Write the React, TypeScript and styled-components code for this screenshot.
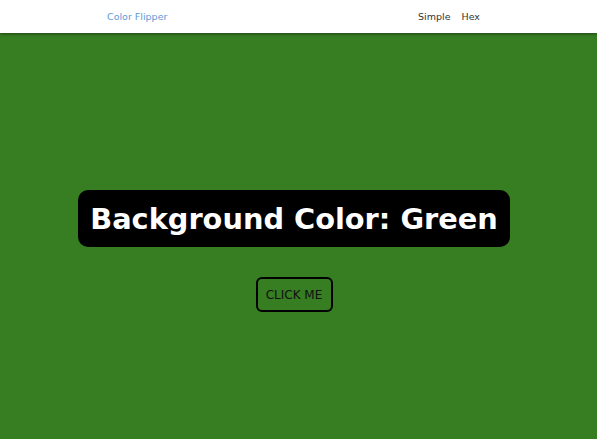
import React, { useState } from "react";
import styled, { createGlobalStyle } from "styled-components";

const Global = createGlobalStyle`
  html, body { margin: 0; padding: 0; }
  body { font-family: "DejaVu Sans", Verdana, sans-serif; }
`;

const Page = styled.div<{ $bg: string }>`
  min-height: 439px;
  background: ${(p) => p.$bg};
  display: flex;
  flex-direction: column;
`;

const Nav = styled.nav`
  height: 33px;
  background: #fff;
  box-shadow: 0 1px 3px rgba(0, 0, 0, 0.45);
  display: flex;
  align-items: center;
  justify-content: space-between;
  padding: 0 117px 0 107px;
  font-size: 9.5px;
  position: relative;
  z-index: 1;
`;

const Brand = styled.a`
  color: #5b9ad8;
  text-decoration: none;
`;

const Links = styled.div`
  display: flex;
  gap: 11px;
`;

const NavLink = styled.a`
  color: #333;
  text-decoration: none;
`;

const Main = styled.main`
  display: flex;
  flex-direction: column;
  align-items: center;
  padding: 157px 9px 0 0;
`;

const Heading = styled.h2`
  margin: 0;
  background: #000;
  color: #fff;
  font-size: 28.8px;
  font-weight: bold;
  padding: 0 12px;
  height: 57px;
  display: flex;
  align-items: center;
  border-radius: 10px;
`;

const Button = styled.button`
  margin-top: 30px;
  width: 77px;
  height: 35px;
  background: transparent;
  border: 2px solid #000;
  border-radius: 6px;
  font-family: "DejaVu Sans", Verdana, sans-serif;
  font-size: 12px;
  color: #111;
  cursor: pointer;
`;

const colors = [
  { name: "Green", value: "#377d22" },
  { name: "Red", value: "#c0392b" },
  { name: "Blue", value: "#2c5fa8" },
];

export default function App() {
  const [i, setI] = useState(0);
  const c = colors[i];
  return (
    <>
      <Global />
      <Page $bg={c.value}>
        <Nav>
          <Brand href="#">Color Flipper</Brand>
          <Links>
            <NavLink href="#">Simple</NavLink>
            <NavLink href="#">Hex</NavLink>
          </Links>
        </Nav>
        <Main>
          <Heading>Background Color: {c.name}</Heading>
          <Button onClick={() => setI((i + 1) % colors.length)}>CLICK ME</Button>
        </Main>
      </Page>
    </>
  );
}
